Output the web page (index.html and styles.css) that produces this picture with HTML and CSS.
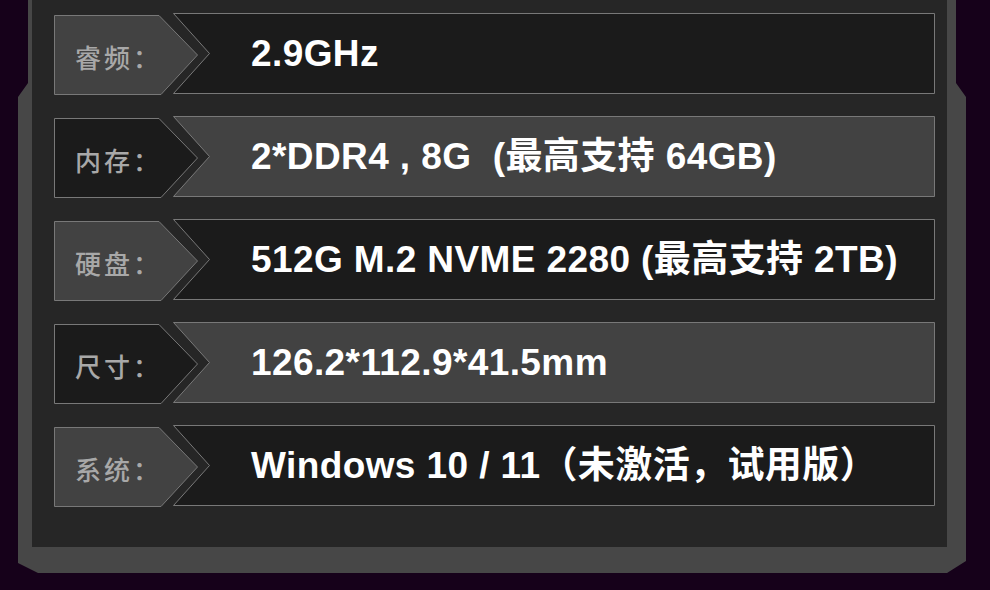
FILE: index.html
```html
<!DOCTYPE html>
<html lang="zh-CN">
<head>
    <meta charset="UTF-8">
    <meta name="viewport" content="width=device-width, initial-scale=1.0">
    <title>配置参数</title>
    <link rel="stylesheet" href="styles.css">
</head>
<body>
    <div class="frame">
        <div class="panel">
            <div class="spec-row">
                <div class="spec-label">
                    <svg class="shape fill-light" viewBox="0 0 145 80"><polygon points="0.5,0.5 105,0.5 143.5,40 107,79.5 0.5,79.5"/></svg>
                    <span class="label-text">睿频：</span>
                </div>
                <div class="spec-value">
                    <svg class="shape fill-dark" viewBox="0 0 762 81"><polygon points="0.5,0.5 761.5,0.5 761.5,80.5 0.5,80.5 36.5,40.5"/></svg>
                    <span class="value-text">2.9GHz</span>
                </div>
            </div>
            <div class="spec-row">
                <div class="spec-label">
                    <svg class="shape fill-dark" viewBox="0 0 145 80"><polygon points="0.5,0.5 105,0.5 143.5,40 107,79.5 0.5,79.5"/></svg>
                    <span class="label-text">内存：</span>
                </div>
                <div class="spec-value">
                    <svg class="shape fill-light" viewBox="0 0 762 81"><polygon points="0.5,0.5 761.5,0.5 761.5,80.5 0.5,80.5 36.5,40.5"/></svg>
                    <span class="value-text">2*DDR4 , 8G &nbsp;(最高支持 64GB)</span>
                </div>
            </div>
            <div class="spec-row">
                <div class="spec-label">
                    <svg class="shape fill-light" viewBox="0 0 145 80"><polygon points="0.5,0.5 105,0.5 143.5,40 107,79.5 0.5,79.5"/></svg>
                    <span class="label-text">硬盘：</span>
                </div>
                <div class="spec-value">
                    <svg class="shape fill-dark" viewBox="0 0 762 81"><polygon points="0.5,0.5 761.5,0.5 761.5,80.5 0.5,80.5 36.5,40.5"/></svg>
                    <span class="value-text">512G M.2 NVME 2280 (最高支持 2TB)</span>
                </div>
            </div>
            <div class="spec-row">
                <div class="spec-label">
                    <svg class="shape fill-dark" viewBox="0 0 145 80"><polygon points="0.5,0.5 105,0.5 143.5,40 107,79.5 0.5,79.5"/></svg>
                    <span class="label-text">尺寸：</span>
                </div>
                <div class="spec-value">
                    <svg class="shape fill-light" viewBox="0 0 762 81"><polygon points="0.5,0.5 761.5,0.5 761.5,80.5 0.5,80.5 36.5,40.5"/></svg>
                    <span class="value-text">126.2*112.9*41.5mm</span>
                </div>
            </div>
            <div class="spec-row">
                <div class="spec-label">
                    <svg class="shape fill-light" viewBox="0 0 145 80"><polygon points="0.5,0.5 105,0.5 143.5,40 107,79.5 0.5,79.5"/></svg>
                    <span class="label-text">系统：</span>
                </div>
                <div class="spec-value">
                    <svg class="shape fill-dark" viewBox="0 0 762 81"><polygon points="0.5,0.5 761.5,0.5 761.5,80.5 0.5,80.5 36.5,40.5"/></svg>
                    <span class="value-text">Windows 10 / 11（未激活，试用版）</span>
                </div>
            </div>
        </div>
    </div>
</body>
</html>
```
FILE: styles.css
```css
body {
    margin: 0;
    background-color: #16011a; /* dark purple page */
    overflow: hidden;
}
.frame {
    margin-left: 18px;
    width: 948px;
    height: 573px;
    background-color: #474747; /* grey outer frame */
    clip-path: polygon(10px 0, 938px 0, 938px 83px, 948px 97px, 948px 561px, 929px 573px, 20px 573px, 0 563px, 0 97px, 10px 83px);
}
.panel {
    box-sizing: border-box;
    margin-left: 14px;
    width: 915px;
    height: 547px;
    padding: 13px 0 0 22px;
    background-color: #262626;
    display: flex;
    flex-direction: column;
    gap: 21px;
}
.spec-row {
    display: flex;
    height: 82px;
}
.spec-label {
    position: relative;
    flex: none;
    width: 145px;
    height: 80px;
    margin-top: 2px;
}
.spec-value {
    position: relative;
    flex: none;
    width: 762px;
    height: 81px;
    margin-left: -26px; /* notch overlaps the label arrow */
}
.shape {
    position: absolute;
    top: 0;
    left: 0;
    width: 100%;
    height: 100%;
}
.shape polygon {
    stroke: #787878;
    stroke-width: 1;
}
.fill-light polygon {
    fill: #424242;
}
.fill-dark polygon {
    fill: #1b1b1b;
}
.label-text {
    position: relative;
    display: block;
    padding: 29px 0 0 21px;
    font-family: "Noto Sans CJK SC", sans-serif;
    font-weight: 500;
    font-size: 26px;
    line-height: 26px;
    letter-spacing: 3px;
    color: #a8a8a8;
}
.value-text {
    position: relative;
    display: block;
    padding: 22px 0 0 78px;
    font-family: "Liberation Sans", "Noto Sans CJK SC", sans-serif;
    font-weight: bold;
    font-size: 37px;
    line-height: 37px;
    letter-spacing: 0.4px;
    color: #ffffff;
    white-space: nowrap;
}
```
